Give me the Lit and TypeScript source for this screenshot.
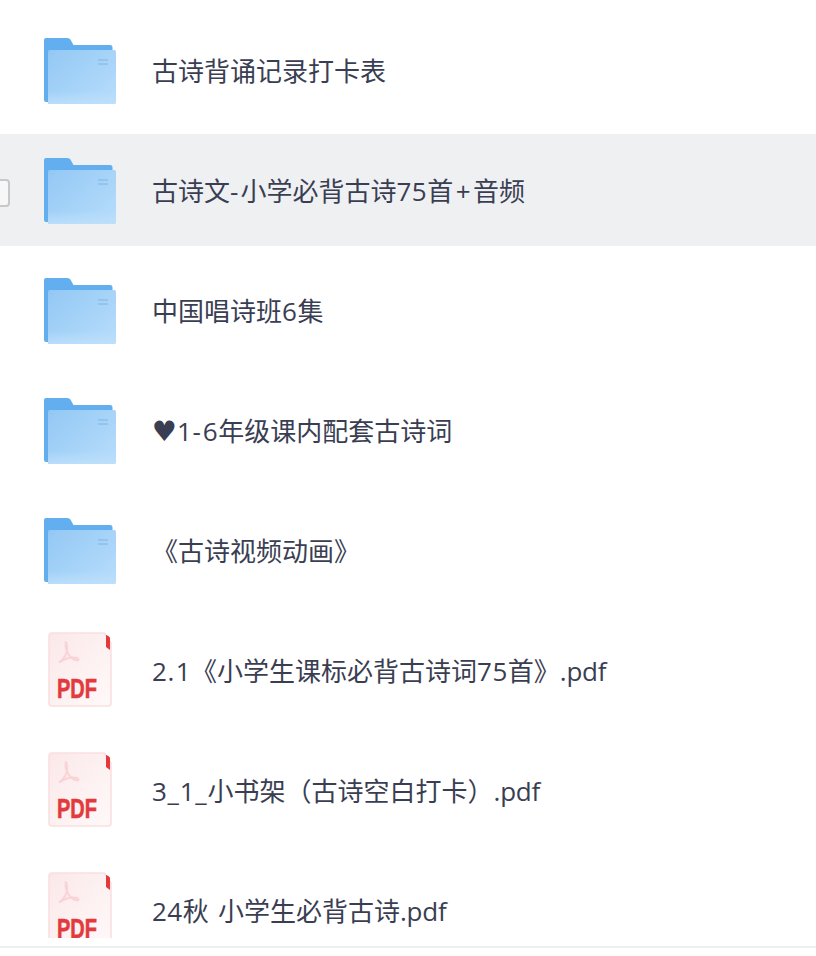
import { LitElement, html, css, svg } from "lit";
import { customElement } from "lit/decorators.js";

const folderIcon = svg`<svg class="icon" width="72" height="68" viewBox="0 0 72 68" fill="none">
  <defs>
    <linearGradient id="ff" x1="0" y1="0" x2="1" y2="0.8">
      <stop offset="0" stop-color="#93c8f4"/><stop offset="1" stop-color="#b4dbfb"/>
    </linearGradient>
    <linearGradient id="fb" x1="0" y1="0" x2="0" y2="1">
      <stop offset="0.75" stop-color="#bfe0fb" stop-opacity="0"/><stop offset="1" stop-color="#bfe0fb" stop-opacity="0.8"/>
    </linearGradient>
  </defs>
  <path d="M0 4a2 2 0 0 1 2-2h21c2 0 3 .8 4 2.400L29.500 9H66a2.500 2.500 0 0 1 2.500 2.500V66H2a2 2 0 0 1-2-2z" fill="#62aeee"/>
  <path d="M4 16a2 2 0 0 1 2-2h64a2 2 0 0 1 2 2v50a2 2 0 0 1-2 2H4z" fill="url(#ff)"/>
  <path d="M4 16a2 2 0 0 1 2-2h64a2 2 0 0 1 2 2v50a2 2 0 0 1-2 2H4z" fill="url(#fb)"/>
  <path d="M54 24h10M54 28h10" stroke="#8dbfec" stroke-width="1.4"/>
</svg>`;

const pdfIcon = svg`<svg class="icon" width="72" height="80" viewBox="0 0 72 80" fill="none">
  <defs>
    <linearGradient id="pf" x1="0" y1="0" x2="1" y2="1">
      <stop offset="0" stop-color="#fbe8e9"/><stop offset="1" stop-color="#fff9f9"/>
    </linearGradient>
  </defs>
  <path d="M8 3h52l7 10v60a3 3 0 0 1-3 3H8a3 3 0 0 1-3-3V6a3 3 0 0 1 3-3z" fill="url(#pf)" stroke="#fadfe0" stroke-width="1.600"/>
  <path d="M62 5c2 .5 3.500 1.500 4 3v12l-4-3z" fill="#e5383b"/>
  <path d="M22 12c-1.500 5 1 10 3 13 2 3 5 5 8 5.500 2 .2 2-2 0-2.500-5-1-12 .5-18 4.500 5-3 8-9 8-13 0-4-.5-7.500-1-7.500z" stroke="#f9d3d5" stroke-width="2"/>
  <text class="pdf" x="33" y="68" text-anchor="middle" textLength="40" lengthAdjust="spacingAndGlyphs">PDF</text>
</svg>`;

const rows: { name: string; type: "folder" | "pdf"; active?: boolean }[] = [
  { name: "古诗背诵记录打卡表", type: "folder" },
  { name: "古诗文-小学必背古诗75首+音频", type: "folder", active: true },
  { name: "中国唱诗班6集", type: "folder" },
  { name: "♥1-6年级课内配套古诗词", type: "folder" },
  { name: "《古诗视频动画》", type: "folder" },
  { name: "2.1《小学生课标必背古诗词75首》.pdf", type: "pdf" },
  { name: "3_1_小书架（古诗空白打卡）.pdf", type: "pdf" },
  { name: "24秋 小学生必背古诗.pdf", type: "pdf" },
];

/* Wraps each run of Latin characters in a span whose class adjusts its advance. */
const classes: [RegExp, string][] = [
  [/^♥$/, "heart"],
  [/^\.pdf$/, "ext"],
  [/^\d+$/, "digits"],
  [/^\.$/, "dot"],
  [/^_$/, "under"],
  [/^ $/, "space"],
  [/^-$/, "dash"],
  [/^\+$/, "plus"],
];

function renderName(name: string) {
  const parts = name.match(/♥|\.pdf|\d+|\.|_| |-|\+|[^♥.\d_ \-+]+/g) ?? [];
  return parts.map((p) => {
    const hit = classes.find(([re]) => re.test(p));
    return hit ? html`<span class=${hit[1]}>${p}</span>` : p;
  });
}

@customElement("app-root")
export class AppRoot extends LitElement {
  static styles = css`
    :host {
      display: block;
      width: 816px;
      height: 956px;
      background: #fff;
      overflow: hidden;
      font-family: "Open Sans", "Noto Sans CJK SC", sans-serif;
    }
    .list {
      height: 938px;
      box-sizing: border-box;
      padding-top: 14px;
      overflow: hidden;
      display: flex;
      flex-direction: column;
      gap: 8px;
    }
    .row {
      position: relative;
      flex: none;
      height: 112px;
      display: flex;
      align-items: center;
      padding-left: 44px;
      gap: 36px;
    }
    .row.active {
      background: #eff0f2;
    }
    .check {
      position: absolute;
      left: -18px;
      top: 45px;
      width: 28px;
      height: 28px;
      box-sizing: border-box;
      border: 2px solid #c6c8cc;
      border-radius: 4px;
      background: #f7f7f8;
    }
    .icon-box {
      width: 72px;
      height: 80px;
      flex: none;
      display: flex;
      align-items: center;
      justify-content: center;
    }
    .pdf {
      font-family: "Liberation Sans", sans-serif;
      font-weight: 700;
      font-size: 28px;
      fill: #e23a3d;
      stroke: #e23a3d;
      stroke-width: 0.6px;
    }
    .name {
      font-size: 26px;
      line-height: 36px;
      color: #3a3e52;
      white-space: nowrap;
      margin-top: 2px;
    }
    .heart {
      display: inline-block;
      width: 25px;
      font-family: "DejaVu Sans", sans-serif;
      font-size: 28px;
      line-height: 1;
    }
    .digits {
      letter-spacing: 0.5px;
    }
    .dot {
      letter-spacing: 1.5px;
    }
    .under {
      letter-spacing: 1px;
    }
    .space {
      letter-spacing: 2.5px;
    }
    .dash {
      letter-spacing: 2px;
    }
    .plus {
      margin: 0 2.500px;
    }
    .ext {
      letter-spacing: -0.25px;
    }
    .footer {
      margin-top: 8px;
      height: 2px;
      background: #eeeff1;
    }
  `;

  render() {
    return html`
      <div class="list">
        ${rows.map(
          (r) => html`
            <div class="row ${r.active ? "active" : ""}">
              ${r.active ? html`<span class="check"></span>` : ""}
              <div class="icon-box">${r.type === "folder" ? folderIcon : pdfIcon}</div>
              <div class="name">${renderName(r.name)}</div>
            </div>
          `
        )}
      </div>
      <div class="footer"></div>
    `;
  }
}
